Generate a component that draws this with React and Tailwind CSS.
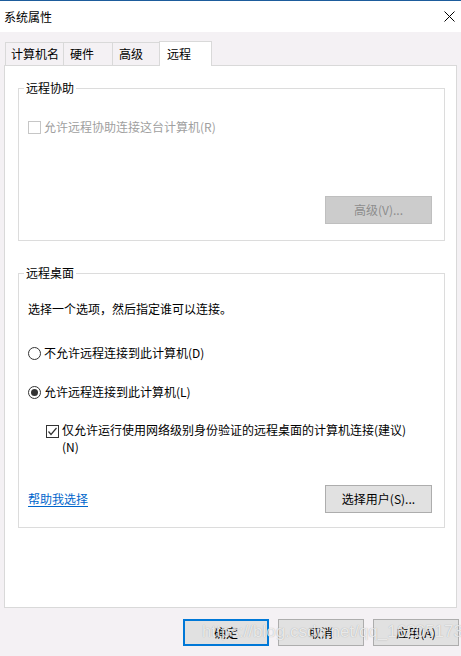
function Radio({ checked, children }) {
  return (
    <div className="ml-[9px] flex h-[16px] items-center">
      <span className="flex h-[13px] w-[13px] items-center justify-center rounded-full border border-[#333333] bg-white">
        {checked && <span className="h-[7px] w-[7px] rounded-full bg-[#333333]" />}
      </span>
      <span className="ml-[3px]">{children}</span>
    </div>
  );
}

function WinButton({ children, primary, disabled }) {
  const base = "flex items-center justify-center text-[12px]";
  if (disabled) {
    return (
      <div className={`${base} h-[28px] w-[107px] border border-[#bfbfbf] bg-[#cccccc] text-[#8c8c8c]`}>
        {children}
      </div>
    );
  }
  if (primary) {
    return (
      <div className={`${base} h-[27px] w-[86px] border-2 border-[#0078d7] bg-[#e1e1e1]`}>{children}</div>
    );
  }
  return <div className={`${base} h-[27px] w-[86px] border border-[#adadad] bg-[#e1e1e1]`}>{children}</div>;
}

function GroupBox({ title, className, children }) {
  return (
    <div className={`relative flex flex-col border border-[#dcdcdc] ${className}`}>
      <span className="absolute -top-[9px] left-[5px] bg-white px-[2px] leading-[16px]">{title}</span>
      {children}
    </div>
  );
}

export default function App() {
  const tabs = [
    { label: "计算机名", w: "w-[59px]", pl: "pl-[5px]" },
    { label: "硬件", w: "w-[50px]", pl: "pl-[6px]" },
    { label: "高级", w: "w-[48px]", pl: "pl-[6px]" },
  ];

  return (
    <div className="relative flex h-[656px] w-[461px] flex-col overflow-hidden bg-[#f4f1f4] font-['Noto_Sans_CJK_SC','Microsoft_YaHei',sans-serif] text-[12px] text-black">
      {/* title bar */}
      <div className="flex h-[32px] items-center justify-between border-t border-[#1d5c9c] bg-white pl-[4px] pr-[5px]">
        <span>系统属性</span>
        <svg width="11" height="11" viewBox="0 0 11 11" className="mr-[1px]">
          <path d="M0.5 0.5L10.5 10.5M10.5 0.5L0.5 10.5" stroke="#000" strokeWidth="1" />
        </svg>
      </div>

      {/* tabs */}
      <div className="mt-[9px] flex h-[24px] items-end pl-[5px]">
        {tabs.map((t, i) => (
          <div
            key={t.label}
            className={`flex h-[23px] items-center border-l border-r border-t border-[#d9d9d9] ${t.w} ${t.pl} ${i > 0 ? "-ml-px" : ""}`}
          >
            {t.label}
          </div>
        ))}
        <div className="relative z-10 -mb-px -ml-px flex h-[25px] w-[53px] items-center border-l border-r border-t border-[#d9d9d9] bg-white pb-[1px] pl-[7px]">
          远程
        </div>
      </div>

      {/* tab panel */}
      <div className="ml-[4px] flex h-[543px] w-[453px] flex-col border border-[#d9d9d9] bg-white pl-[13px]">
        <GroupBox title="远程协助" className="mt-[22px] h-[153px] w-[427px]">
          <div className="ml-[9px] mt-[30px] flex h-[16px] items-center text-[#a0a0a0]">
            <span className="h-[13px] w-[13px] border border-[#c6c6c6] bg-white" />
            <span className="ml-[3px]">允许远程协助连接这台计算机(R)</span>
          </div>
          <div className="mr-[12px] mt-[61px] self-end">
            <WinButton disabled>高级(V)...</WinButton>
          </div>
        </GroupBox>

        <GroupBox title="远程桌面" className="mt-[32px] h-[255px] w-[427px]">
          <div className="ml-[9px] mt-[27px] h-[16px] leading-[16px]">选择一个选项，然后指定谁可以连接。</div>
          <div className="mt-[28px]">
            <Radio>不允许远程连接到此计算机(D)</Radio>
          </div>
          <div className="mt-[23px]">
            <Radio checked>允许远程连接到此计算机(L)</Radio>
          </div>
          <div className="ml-[27px] mt-[21px] flex items-start">
            <span className="mt-[4px] flex h-[13px] w-[13px] shrink-0 items-center justify-center border border-[#333333] bg-white">
              <svg width="11" height="11" viewBox="0 0 11 11">
                <path d="M1.5 5.5L4 8.5L9.5 2" fill="none" stroke="#333" strokeWidth="1.2" />
              </svg>
            </span>
            <span className="ml-[3px] leading-[17px]">
              仅允许运行使用网络级别身份验证的远程桌面的计算机连接(建议)
              <br />
              (N)
            </span>
          </div>
          <div className="ml-[9px] mr-[12px] mt-[30px] flex h-[28px] items-center justify-between">
            <a className="text-[#0066cc] underline underline-offset-2">帮助我选择</a>
            <div className="flex h-[28px] w-[107px] items-center justify-center border border-[#adadad] bg-[#e1e1e1]">
              选择用户(S)...
            </div>
          </div>
        </GroupBox>
      </div>

      {/* dialog buttons */}
      <div className="mt-[11px] flex justify-end gap-[9px] pr-[2px]">
        <WinButton primary>确定</WinButton>
        <WinButton>取消</WinButton>
        <WinButton>应用(A)</WinButton>
      </div>

      {/* watermark */}
      <span className="pointer-events-none absolute left-[202px] top-[621px] font-['Liberation_Sans',sans-serif] text-[17px] leading-[22px] text-white/75 [text-shadow:0_0_1px_rgba(0,0,0,0.3)]">
        https://blog.csdn.net/qq_16205173
      </span>
    </div>
  );
}
